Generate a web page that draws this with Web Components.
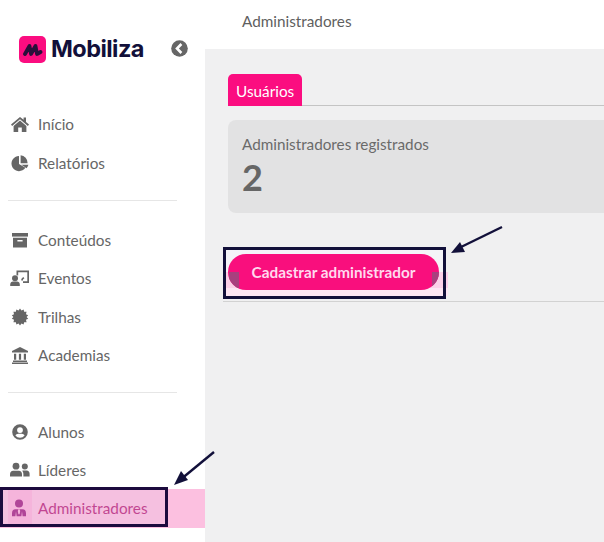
<!DOCTYPE html>
<html lang="pt">
<head>
<meta charset="utf-8">
<title>Administradores</title>
<style>
  html, body { margin: 0; height: 100%; overflow: hidden; background: #f0f0f1; }
  body { font-family: "Lato", "Liberation Sans", sans-serif; color: #666; }
</style>
</head>
<body>
<app-shell>
  <side-bar slot="side">
    <brand-logo></brand-logo>
    <nav-group>
      <nav-item icon="home">Início</nav-item>
      <nav-item icon="chart">Relatórios</nav-item>
    </nav-group>
    <nav-group>
      <nav-item icon="box">Conteúdos</nav-item>
      <nav-item icon="event">Eventos</nav-item>
      <nav-item icon="badge">Trilhas</nav-item>
      <nav-item icon="bank">Academias</nav-item>
    </nav-group>
    <nav-group last>
      <nav-item icon="user">Alunos</nav-item>
      <nav-item icon="users">Líderes</nav-item>
      <nav-item icon="admin" active>Administradores</nav-item>
    </nav-group>
  </side-bar>
  <page-head slot="head">Administradores</page-head>
  <tab-bar><span>Usuários</span></tab-bar>
  <stat-card label="Administradores registrados" value="2"></stat-card>
  <action-row>Cadastrar administrador</action-row>
  <arrow-note style="left:172px;top:449px;width:44px;height:38px" d="M42 3 L8 31" head="2,36 16,31 9,22"></arrow-note>
  <arrow-note style="left:449px;top:225px;width:55px;height:30px" d="M53 2 L10 23" head="2,28 16,27 11,17"></arrow-note>
  <mark-box style="left:0;top:487px;width:162px;height:34px"></mark-box>
</app-shell>

<script>
// spiky seal for Trilhas
function sealPoints(teeth, outer, inner) {
  const pts = [];
  for (let i = 0; i < teeth * 2; i++) {
    const r = i % 2 ? inner : outer;
    const a = Math.PI * i / teeth;
    pts.push((10 + r * Math.sin(a)).toFixed(2) + ',' + (10 - r * Math.cos(a)).toFixed(2));
  }
  return pts.join(' ');
}

// icons, 20x20 box
const ICONS = {
  home: '<path d="M10 3 1 10.6l1.1 1.3L10 5.2l7.9 6.7 1.1-1.3-3-2.5V3.6h-2.4v2.2z"/><path d="M10 6.6 3.6 12v6h4.6v-4.4h3.6V18h4.6v-6z"/>',
  chart: '<path d="M9 3a7.6 7.6 0 1 0 6.4 11.8L9 11z"/><path d="M10.6 2.2v8l7 0A8 8 0 0 0 10.6 2.2z"/><path d="M11.4 11.8h7a8 8 0 0 1-1.8 3.4z"/>',
  box: '<path d="M2 3h16v3.6H2z"/><path d="M3 7.8h14V17.6H3zM7.4 10v1.4h5.2V10z" fill-rule="evenodd"/>',
  event: '<path d="M6.5 2.500H19v12.500h-6v-1.800h4.300V4.200H8.200v3.300L6.500 7.200z"/><path d="M13.200 9l1.200 1.200-1.400 1.400v1h-1.700v-1.700z"/><circle cx="5" cy="10.200" r="3"/><path d="M.2 18v-1.500c0-2 1.300-3.100 2.800-3.100h4c1.500 0 2.800 1.100 2.800 3.100V18z"/>',
  badge: '<polygon points="' + sealPoints(14, 8.4, 6.6) + '"/>',
  bank: '<path d="M10 2 2 6v1.6h16V6z"/><path d="M4 8.8h2.2v6H4zM8.9 8.8h2.2v6H8.9zM13.8 8.8H16v6h-2.2z"/><path d="M3 15.600h14V17H3zM2 17.600h16V19H2z"/>',
  user: '<path fill-rule="evenodd" d="M10 2.200a7.800 7.800 0 1 0 0 15.600 7.800 7.800 0 0 0 0-15.600zm0 3a2.900 2.900 0 1 1 0 5.800 2.900 2.900 0 0 1 0-5.800zm0 10.600a6 6 0 0 1-4.600-2.200c.6-1.100 1.700-1.800 3-1.800h3.200c1.300 0 2.400.7 3 1.800A6 6 0 0 1 10 15.800z"/>',
  users: '<circle cx="6" cy="6.200" r="3.400"/><circle cx="14.800" cy="6.600" r="3"/><path d="M0 16.600v-2.400c0-2.200 1.300-3.400 3.200-3.400h5.600c1.900 0 3.200 1.200 3.200 3.400v2.400z"/><path d="M13.400 16.600v-2.400c0-1.400-.4-2.600-1.200-3.400.5-.2 1-.3 1.400-.3h3c1.900 0 3 1.300 3 3.300v2.800z"/>',
  admin: '<circle cx="9" cy="5.400" r="4"/><path fill-rule="evenodd" d="M2 18.200v-3c0-2.600 1.300-4 3.400-4h7.200c2.100 0 3.400 1.400 3.400 4v3zM6 13.200l-.6 5h1.200zM12 13.200l-.6 5h1.200zM8.300 11.400l-.5 1.500.6 3.300h1.200l.6-3.300-.5-1.500z"/>'
};

class AppShell extends HTMLElement {
  constructor() {
    super();
    this.attachShadow({ mode: 'open' });
    this.shadowRoot.innerHTML = `
      <style>
        :host { display: grid; grid-template-columns: 205px 1fr; grid-template-rows: 49px 1fr; width: 604px; height: 542px; position: relative; overflow: hidden; }
        .side { grid-row: 1 / 3; }
        main { padding: 25px 0 0 23px; min-width: 0; }
      </style>
      <div class="side"><slot name="side"></slot></div>
      <div><slot name="head"></slot></div>
      <main><slot></slot></main>
    `;
  }
}

class SideBar extends HTMLElement {
  constructor() {
    super();
    this.attachShadow({ mode: 'open' });
    this.shadowRoot.innerHTML = `
      <style>
        :host { display: block; height: 542px; background: #fff; }
      </style>
      <slot></slot>
    `;
  }
}

class BrandLogo extends HTMLElement {
  constructor() {
    super();
    this.attachShadow({ mode: 'open' });
    this.shadowRoot.innerHTML = `
      <style>
        :host { display: flex; align-items: center; height: 28px; padding: 35px 17px 0 19px; margin-bottom: 42px; }
        .mark { width: 27px; height: 27px; border-radius: 5px; background: #fb0d80; display: flex; align-items: center; justify-content: center; flex: none; }
        .name { font: 700 23.5px/28px "Inter", "Liberation Sans", sans-serif; color: #12103a; margin-left: 5px; letter-spacing: -.55px; flex: 1; }
        .back { width: 17px; height: 17px; flex: none; margin-top: -2px; }
      </style>
      <span class="mark">
        <svg width="21" height="15" viewBox="0 0 21 15" fill="none" stroke="#2a0f3a" stroke-width="3.800" stroke-linecap="round" stroke-linejoin="round">
          <path d="M3 12 L7.500 4 L9 12 L13.500 4 L15 12 L18.500 10"/>
        </svg>
      </span>
      <span class="name">Mobiliza</span>
      <svg class="back" viewBox="0 0 17 17">
        <circle cx="8.500" cy="8.500" r="8.300" fill="#666"/>
        <path d="M10.400 4 6 8.500l4.400 4.500" fill="none" stroke="#fff" stroke-width="2.600"/>
      </svg>
    `;
  }
}

class NavGroup extends HTMLElement {
  constructor() {
    super();
    this.attachShadow({ mode: 'open' });
    this.shadowRoot.innerHTML = `
      <style>
        :host { display: block; }
        .rule { height: 1px; background: #e6e6e6; margin: 18px 28px 20px 8px; }
        :host([last]) .rule { display: none; }
        :host([last]) { margin-top: -1px; }
      </style>
      <slot></slot>
      <div class="rule"></div>
    `;
  }
}

class NavItem extends HTMLElement {
  constructor() {
    super();
    this.attachShadow({ mode: 'open' });
    this.shadowRoot.innerHTML = `
      <style>
        :host { display: flex; align-items: center; height: 38.4px; color: #666; font-size: 15.3px; }
        .ic { width: 24px; height: 38px; margin-left: 8px; display: flex; align-items: center; justify-content: center; flex: none; }
        svg { width: 20px; height: 20px; fill: #666; }
        .txt { margin-left: 6px; }
        :host([active]) { background: #fcc0e0; color: #b81c78; }
        :host([active]) .ic { background: #fdb0da; }
        :host([active]) svg { fill: #a01c80; }
      </style>
      <span class="ic"><svg viewBox="0 0 20 20"></svg></span>
      <span class="txt"><slot></slot></span>
    `;
  }
  connectedCallback() {
    this.shadowRoot.querySelector('svg').innerHTML = ICONS[this.getAttribute('icon')] || '';
  }
}

class PageHead extends HTMLElement {
  constructor() {
    super();
    this.attachShadow({ mode: 'open' });
    this.shadowRoot.innerHTML = `
      <style>
        :host { display: flex; align-items: center; height: 42px; padding-left: 37px; padding-bottom: 7px; background: #fff; color: #5f5f5f; font-size: 15.3px; }
      </style>
      <slot></slot>
    `;
  }
}

class TabBar extends HTMLElement {
  constructor() {
    super();
    this.attachShadow({ mode: 'open' });
    this.shadowRoot.innerHTML = `
      <style>
        :host { display: block; border-bottom: 1px solid #c4c4c4; height: 31px; }
        ::slotted(span) { display: inline-block; height: 32px; line-height: 34px; padding: 0 7.5px 0 8px; background: #fb0d80; color: #fff; font-size: 15.3px; border-radius: 5px 5px 0 0; box-sizing: border-box; }
      </style>
      <slot></slot>
    `;
  }
}

class StatCard extends HTMLElement {
  constructor() {
    super();
    this.attachShadow({ mode: 'open' });
    this.shadowRoot.innerHTML = `
      <style>
        :host { display: block; margin-top: 14px; height: 93px; width: 420px; box-sizing: border-box; padding: 14px 14px; background: #e2e2e3; border-radius: 8px 0 0 8px; }
        .label { font-size: 15.25px; line-height: 20px; color: #6a6a6a; }
        .value { font-size: 36px; font-weight: 700; line-height: 44px; color: #666; margin-top: 1px; }
      </style>
      <div class="label"></div>
      <div class="value"></div>
    `;
  }
  connectedCallback() {
    this.shadowRoot.querySelector('.label').textContent = this.getAttribute('label');
    this.shadowRoot.querySelector('.value').textContent = this.getAttribute('value');
  }
}

class ActionRow extends HTMLElement {
  constructor() {
    super();
    this.attachShadow({ mode: 'open' });
    this.shadowRoot.innerHTML = `
      <style>
        :host { display: block; margin-top: 34px; margin-left: -5px; position: relative; height: 54px; border-bottom: 1px solid #d2d2d2; }
        .frame { position: relative; box-sizing: border-box; width: 223px; height: 52px; padding: 6.5px 5px; background: #f4f4f8; }
        /* the annotation's box sits over the highlight band */
        .frame::after { content: ""; position: absolute; inset: 0; border: 3px solid #12103a; }
        .band { position: absolute; left: 2px; right: -2px; top: 25px; height: 24px; background: linear-gradient(#fbd0e8 16px, #fde6f3 16px); }
        button { position: relative; display: block; width: 211px; height: 36px; border: 0; border-radius: 18px; background: #f90f7d; color: #ffd9ee; font: 700 15.3px "Lato", "Liberation Sans", sans-serif; padding: 0; overflow: hidden; }
        button i { position: absolute; top: 18.5px; height: 16px; background: #a8407e; }
        button i.l { left: 1px; width: 10px; }
        button i.r { right: 0; width: 7px; }
        button span { position: relative; }
      </style>
      <div class="frame">
        <div class="band"></div>
        <button><i class="l"></i><i class="r"></i><span><slot></slot></span></button>
      </div>
    `;
  }
}

class ArrowNote extends HTMLElement {
  constructor() {
    super();
    this.attachShadow({ mode: 'open' });
    this.shadowRoot.innerHTML = `
      <style>
        :host { position: absolute; display: block; }
        svg { display: block; width: 100%; height: 100%; overflow: visible; }
      </style>
      <svg><path fill="none" stroke="#12103a" stroke-width="2.4"/><polygon fill="#12103a"/></svg>
    `;
  }
  connectedCallback() {
    this.shadowRoot.querySelector('path').setAttribute('d', this.getAttribute('d'));
    this.shadowRoot.querySelector('polygon').setAttribute('points', this.getAttribute('head'));
  }
}

class MarkBox extends HTMLElement {
  constructor() {
    super();
    this.attachShadow({ mode: 'open' });
    this.shadowRoot.innerHTML = `
      <style>
        :host { position: absolute; display: block; border: 3px solid #1c0b3e; background: rgba(225, 190, 225, .25); }
      </style>
    `;
  }
}

customElements.define('app-shell', AppShell);
customElements.define('side-bar', SideBar);
customElements.define('brand-logo', BrandLogo);
customElements.define('nav-group', NavGroup);
customElements.define('nav-item', NavItem);
customElements.define('page-head', PageHead);
customElements.define('tab-bar', TabBar);
customElements.define('stat-card', StatCard);
customElements.define('action-row', ActionRow);
customElements.define('arrow-note', ArrowNote);
customElements.define('mark-box', MarkBox);
</script>
</body>
</html>
